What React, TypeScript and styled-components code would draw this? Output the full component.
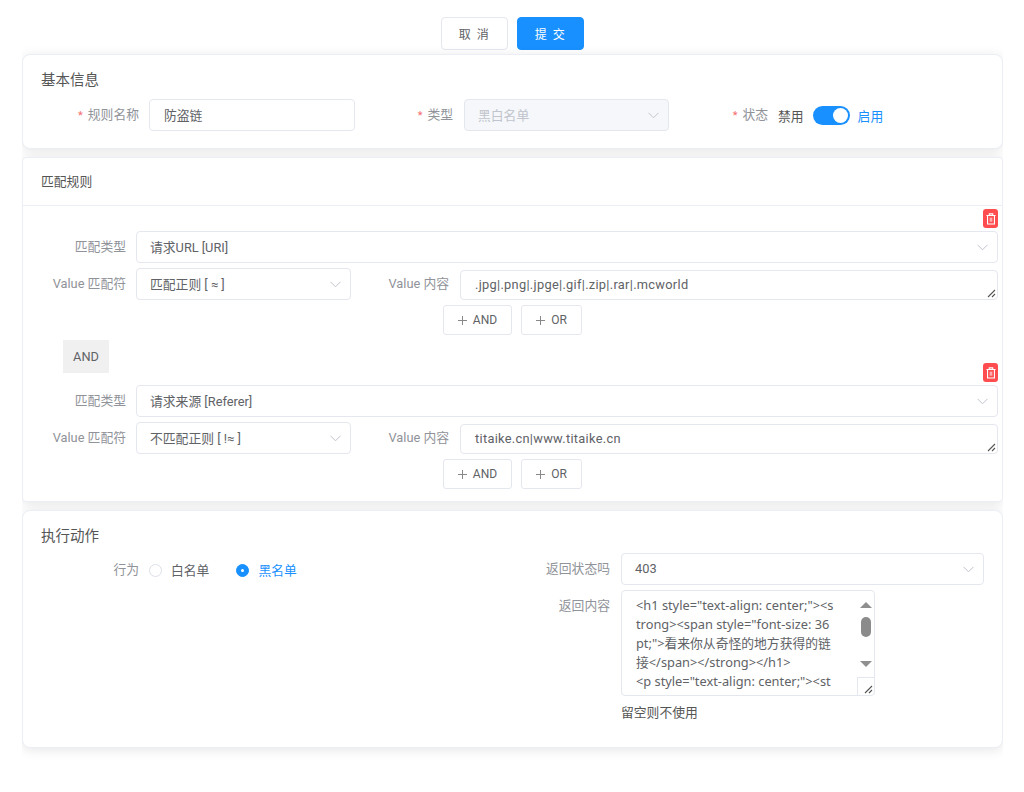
import React from 'react';
import styled, { createGlobalStyle } from 'styled-components';

const Global = createGlobalStyle`
  html, body { margin: 0; padding: 0; background: #fff; }
  body { font-family: Roboto, "Noto Sans CJK SC", sans-serif; font-size: 12.8px; color: #606266; }
  * { box-sizing: border-box; }
`;

const Page = styled.div`
  width: 981px;
  margin-left: 22px;
  padding: 17px 0 45px;
  overflow-x: clip;
`;
const Toolbar = styled.div`
  display: flex;
  justify-content: center;
  gap: 9px;
  margin-bottom: 4px;
`;
const ActionButton = styled.button<{ $primary?: boolean }>`
  width: 67px;
  height: 33px;
  border-radius: 4px;
  border: 1px solid ${p => (p.$primary ? '#1890ff' : '#e4e7ed')};
  background: ${p => (p.$primary ? '#1890ff' : '#fff')};
  color: ${p => (p.$primary ? '#fff' : '#606266')};
  font: inherit;
  font-size: 12px;
  letter-spacing: 1.5px;
  padding: 0;
`;
const Card = styled.section<{ $square?: boolean }>`
  background: #fff;
  border: 1px solid #ebeef5;
  border-radius: ${p => (p.$square ? '4px' : '8px')};
  box-shadow: 0 2px 12px rgba(0, 0, 0, 0.1);
  margin-bottom: 8px;
  position: relative;
`;
const CardTitle = styled.h2`
  margin: 0;
  padding: 16px 18px 0;
  font-size: 14.5px;
  line-height: 20px;
  font-weight: 400;
  color: #555;
`;
const RuleHeader = styled.h3`
  margin: 0;
  padding: 0 18px;
  height: 48px;
  line-height: 47px;
  font-size: 12.8px;
  font-weight: 400;
  color: #555;
  border-bottom: 1px solid #ebeef5;
`;
const BasicRow = styled.div`
  display: flex;
  align-items: center;
  margin-top: 8px;
  padding-bottom: 17px;
`;
const Label = styled.label<{ $width: number }>`
  width: ${p => p.$width}px;
  flex: none;
  text-align: right;
  color: #909399;
  line-height: 31px;
  white-space: nowrap;
`;
const RadioLabel = styled(Label)`
  line-height: 34px;
`;
const Star = styled.span`
  color: #f56c6c;
  margin-right: 5px;
  font-size: 11px;
`;
const Field = styled.div`
  display: flex;
  align-items: flex-start;
`;
const TextInput = styled.input<{ $width: number }>`
  width: ${p => p.$width}px;
  height: 32px;
  margin-left: 10px;
  padding: 0 14px 2px;
  border: 1px solid #e4e7ed;
  border-radius: 4px;
  color: #606266;
  font: inherit;
  outline: none;
`;
const Select = styled.div<{ $width?: number; $disabled?: boolean; $gap?: number }>`
  ${p => (p.$width ? `width: ${p.$width}px; flex: none;` : 'flex: 1;')}
  height: 32px;
  margin-left: ${p => p.$gap ?? 10}px;
  padding: 0 9px 2px 13px;
  display: flex;
  align-items: center;
  justify-content: space-between;
  border: 1px solid #e4e7ed;
  border-radius: 4px;
  background: ${p => (p.$disabled ? '#f5f7fa' : '#fff')};
  color: ${p => (p.$disabled ? '#c0c4cc' : '#606266')};
  white-space: nowrap;
`;
const ChevronSvg = styled.svg`
  flex: none;
  width: 11px;
  height: 7px;
  margin-top: 2px;
`;
const Chevron = () => (
  <ChevronSvg viewBox="0 0 11 7" fill="none" stroke="#c0c4cc" strokeWidth="1">
    <path d="M0.5 0.8 L5.5 5.8 L10.5 0.8" />
  </ChevronSvg>
);
const SwitchField = styled.div`
  display: flex;
  align-items: center;
  margin-left: 10px;
  height: 32px;
`;
const SwitchText = styled.span<{ $on?: boolean }>`
  color: ${p => (p.$on ? '#1890ff' : '#555')};
`;
const SwitchTrack = styled.span`
  width: 37px;
  height: 19px;
  margin: 0 8px 0 9px;
  border-radius: 10px;
  background: #1890ff;
  display: flex;
  justify-content: flex-end;
  align-items: center;
  padding-right: 2px;
`;
const SwitchKnob = styled.span`
  width: 15px;
  height: 15px;
  border-radius: 50%;
  background: #fff;
`;
const RuleBlock = styled.div`
  padding: 3px 4px 0 0;
`;
const TrashRow = styled.div`
  display: flex;
  justify-content: flex-end;
  margin-bottom: 3px;
`;
const TrashButton = styled.button`
  width: 15px;
  height: 19px;
  padding: 0;
  border: 0;
  border-radius: 3px;
  background: #ff4d4f;
  display: flex;
  align-items: center;
  justify-content: center;
`;
const RuleRow = styled.div`
  display: flex;
  align-items: flex-start;
  margin-bottom: 5px;
`;
const ValueWrap = styled.div`
  flex: 1;
  min-width: 0;
  height: 30px;
  margin: 2px 0 0 11px;
  position: relative;
`;
const ValueArea = styled.textarea`
  display: block;
  width: 100%;
  height: 100%;
  padding: 5px 14px 0;
  border: 1px solid #e4e7ed;
  border-radius: 4px;
  color: #606266;
  font: inherit;
  letter-spacing: 0.3px;
  line-height: 18px;
  outline: none;
  resize: none;
  overflow: hidden;
`;
const GripSlot = styled.span`
  position: absolute;
  right: 2px;
  bottom: 2px;
  display: flex;
`;
const AddRow = styled.div`
  display: flex;
  justify-content: center;
  gap: 9px;
  margin-right: -4px;
`;
const AddButton = styled.button<{ $width: number }>`
  width: ${p => p.$width}px;
  height: 30px;
  padding: 0;
  display: flex;
  align-items: center;
  justify-content: center;
  gap: 6px;
  border: 1px solid #e4e7ed;
  border-radius: 3px;
  background: #fff;
  color: #606266;
  font: inherit;
  font-size: 12px;
`;
const Conjunction = styled.div`
  width: 46px;
  height: 33px;
  margin: 5px 0 -13px 40px;
  background: #f0f0f0;
  color: #606266;
  display: flex;
  align-items: center;
  justify-content: center;
`;
const RulesEnd = styled.div`
  height: 12px;
`;
const ActionGrid = styled.div`
  display: grid;
  grid-template-columns: 489px 1fr;
  margin-top: 6px;
  padding-right: 18px;
  padding-bottom: 25px;
`;
const RadioGroup = styled.div`
  display: flex;
  align-items: center;
  height: 34px;
  margin-left: 10px;
`;
const RadioDot = styled.span<{ $on?: boolean }>`
  width: 13px;
  height: 13px;
  border-radius: 50%;
  margin-right: 9px;
  display: flex;
  align-items: center;
  justify-content: center;
  background: ${p => (p.$on ? '#1890ff' : '#fff')};
  border: 1px solid ${p => (p.$on ? '#1890ff' : '#dcdfe6')};
  &::after {
    content: '';
    width: 3px;
    height: 3px;
    border-radius: 50%;
    background: ${p => (p.$on ? '#fff' : 'transparent')};
  }
`;
const RadioText = styled.span<{ $on?: boolean }>`
  color: ${p => (p.$on ? '#1890ff' : '#606266')};
  margin-right: 27px;
  padding-bottom: 2px;
`;
const RightColumn = styled.div`
  display: flex;
  flex-direction: column;
  gap: 5px;
`;
const ContentBox = styled.div`
  width: 254px;
  height: 106px;
  margin-left: 11px;
  display: flex;
  border: 1px solid #e4e7ed;
  border-radius: 4px;
  overflow: hidden;
`;
const ContentText = styled.div`
  flex: 1;
  padding: 5px 0 0 14px;
  font-family: "Noto Sans", "Noto Sans CJK SC", sans-serif;
  line-height: 19px;
  white-space: pre;
  overflow: hidden;
  color: #606266;
`;
const ScrollTrack = styled.div`
  width: 17px;
  flex: none;
  display: flex;
  flex-direction: column;
  align-items: center;
`;
const Arrow = styled.span<{ $up?: boolean }>`
  width: 0;
  height: 0;
  border-left: 6px solid transparent;
  border-right: 6px solid transparent;
  ${p => (p.$up ? 'border-bottom: 6px solid #8f8f8f; margin-top: 11px;' : 'border-top: 6px solid #8f8f8f; margin-top: 24px;')}
`;
const Thumb = styled.span`
  width: 10px;
  height: 20px;
  margin-top: 9px;
  border-radius: 5px;
  background: #8b8b8b;
`;
const Corner = styled.span`
  width: 17px;
  height: 18px;
  margin-top: auto;
  border-left: 1px solid #e4e7ed;
  border-top: 1px solid #e4e7ed;
  display: flex;
  align-items: flex-end;
  justify-content: flex-end;
  padding: 0 1px 1px 0;
`;
const Hint = styled.div`
  margin: 3px 0 0 109px;
  line-height: 18px;
  color: #555;
`;

const TrashIcon = () => (
  <svg width="10" height="12" viewBox="0 0 11 13" fill="none" stroke="#fff" strokeWidth="1.2">
    <path d="M0.5 2.6 H10.5 M3.6 2.6 V0.9 H7.4 V2.6" />
    <path d="M1.7 2.6 V12 H9.3 V2.6" />
    <path d="M4 5 H7 V9.5 H4 Z" fill="#fff" fillOpacity="0.55" stroke="none" />
  </svg>
);
const PlusIcon = () => (
  <svg width="9" height="9" viewBox="0 0 9 9" stroke="#888" strokeWidth="1">
    <path d="M4.5 0 V9 M0 4.5 H9" />
  </svg>
);
const GripIcon = () => (
  <svg width="9" height="9" viewBox="0 0 9 9" fill="none" stroke="#555" strokeWidth="1.1">
    <path d="M1 8 L8 1 M5 8 L8 5" />
  </svg>
);

function Rule({ type, op, value }: { type: string; op: string; value: string }) {
  return (
    <RuleBlock>
      <TrashRow>
        <TrashButton aria-label="删除"><TrashIcon /></TrashButton>
      </TrashRow>
      <RuleRow>
        <Label $width={103}>匹配类型</Label>
        <Select>{type}<Chevron /></Select>
      </RuleRow>
      <RuleRow>
        <Label $width={103}>Value 匹配符</Label>
        <Select $width={215}>{op}<Chevron /></Select>
        <Label $width={98}>Value 内容</Label>
        <ValueWrap>
          <ValueArea readOnly value={value} />
          <GripSlot><GripIcon /></GripSlot>
        </ValueWrap>
      </RuleRow>
      <AddRow>
        <AddButton $width={69}><PlusIcon />AND</AddButton>
        <AddButton $width={61}><PlusIcon />OR</AddButton>
      </AddRow>
    </RuleBlock>
  );
}

const lines = [
  '<h1 style="text-align: center;"><s',
  'trong><span style="font-size: 36',
  'pt;">看来你从奇怪的地方获得的链',
  '接</span></strong></h1>',
  '<p style="text-align: center;"><st',
];

export default function App() {
  return (
    <Page>
      <Global />
      <Toolbar>
        <ActionButton>取 消</ActionButton>
        <ActionButton $primary>提 交</ActionButton>
      </Toolbar>

      <Card>
        <CardTitle>基本信息</CardTitle>
        <BasicRow>
          <Field>
            <Label $width={116}><Star>*</Star>规则名称</Label>
            <TextInput $width={206} readOnly value="防盗链" />
          </Field>
          <Field>
            <Label $width={98}><Star>*</Star>类型</Label>
            <Select $width={205} $disabled $gap={11}>黑白名单<Chevron /></Select>
          </Field>
          <Field>
            <Label $width={99}><Star>*</Star>状态</Label>
            <SwitchField>
              <SwitchText>禁用</SwitchText>
              <SwitchTrack><SwitchKnob /></SwitchTrack>
              <SwitchText $on>启用</SwitchText>
            </SwitchField>
          </Field>
        </BasicRow>
      </Card>

      <Card $square>
        <RuleHeader>匹配规则</RuleHeader>
        <Rule type="请求URL [URI]" op="匹配正则 [ ≈ ]" value=".jpg|.png|.jpge|.gif|.zip|.rar|.mcworld" />
        <Conjunction>AND</Conjunction>
        <Rule type="请求来源 [Referer]" op="不匹配正则 [ !≈ ]" value="titaike.cn|www.titaike.cn" />
        <RulesEnd />
      </Card>

      <Card>
        <CardTitle>执行动作</CardTitle>
        <ActionGrid>
          <Field>
            <RadioLabel $width={116}>行为</RadioLabel>
            <RadioGroup>
              <RadioDot />
              <RadioText>白名单</RadioText>
              <RadioDot $on />
              <RadioText $on>黑名单</RadioText>
            </RadioGroup>
          </Field>
          <RightColumn>
            <Field>
              <Label $width={98}>返回状态吗</Label>
              <Select $gap={11}>403<Chevron /></Select>
            </Field>
            <Field>
              <Label $width={98}>返回内容</Label>
              <ContentBox>
                <ContentText>
                  {lines.map(l => <div key={l}>{l}</div>)}
                </ContentText>
                <ScrollTrack>
                  <Arrow $up />
                  <Thumb />
                  <Arrow />
                  <Corner><GripIcon /></Corner>
                </ScrollTrack>
              </ContentBox>
            </Field>
            <Hint>留空则不使用</Hint>
          </RightColumn>
        </ActionGrid>
      </Card>
    </Page>
  );
}
